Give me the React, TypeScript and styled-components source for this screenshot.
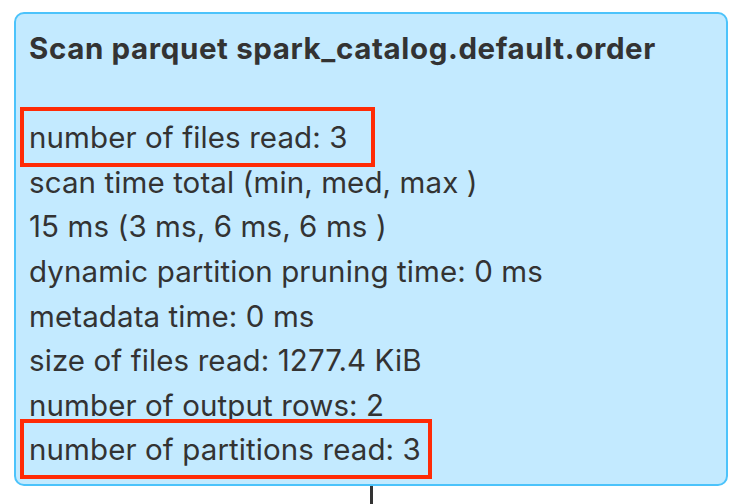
import React from 'react';
import styled, { createGlobalStyle } from 'styled-components';

const GlobalStyle = createGlobalStyle`
  html, body {
    margin: 0;
    padding: 0;
    background: #ffffff;
  }
  body {
    font-family: Inter, "Noto Sans", "Liberation Sans", sans-serif;
    color: #333333;
  }
`;

const Page = styled.div`
  padding: 12px 0 0 14px;
  width: 747px;
  height: 504px;
  box-sizing: border-box;
  overflow: hidden;
`;

const NodeBox = styled.div`
  width: 714px;
  height: 474px;
  box-sizing: border-box;
  background: #c3eaff;
  border: 2px solid #4cc3fb;
  border-radius: 10px;
  padding: 12px 13px;
  font-size: 29.5px;
  line-height: 44.6px;
  letter-spacing: 0.1px;
  color: #333333;
`;

const Title = styled.div`
  font-weight: 700;
  letter-spacing: 0.62px;
  white-space: nowrap;
`;

const Blank = styled.div`
  height: 44.6px;
`;

const Metric = styled.div<{ $highlight?: boolean; $boxWidth?: number }>`
  position: relative;
  white-space: nowrap;

  ${({ $highlight, $boxWidth }) =>
    $highlight &&
    `
    &::before {
      content: '';
      position: absolute;
      left: -9px;
      top: -8px;
      bottom: -7px;
      width: ${$boxWidth}px;
      box-sizing: border-box;
      border: 4px solid #ff2b06;
      pointer-events: none;
    }
  `}
`;

const Connector = styled.div`
  width: 3px;
  height: 18px;
  margin-left: 356px;
  background: #333333;
`;

const metrics = [
  { text: 'number of files read: 3', highlight: true, width: 355 },
  { text: 'scan time total (min, med, max )' },
  { text: '15 ms (3 ms, 6 ms, 6 ms )' },
  { text: 'dynamic partition pruning time: 0 ms' },
  { text: 'metadata time: 0 ms' },
  { text: 'size of files read: 1277.4 KiB' },
  { text: 'number of output rows: 2' },
  { text: 'number of partitions read: 3', highlight: true, width: 412 },
];

const App: React.FC = () => {
  return (
    <>
      <GlobalStyle />
      <Page>
        <NodeBox>
          <Title>Scan parquet spark_catalog.default.order</Title>
          <Blank />
          {metrics.map((m) => (
            <Metric key={m.text} $highlight={m.highlight} $boxWidth={m.width}>
              {m.text}
            </Metric>
          ))}
        </NodeBox>
        <Connector />
      </Page>
    </>
  );
};

export default App;
